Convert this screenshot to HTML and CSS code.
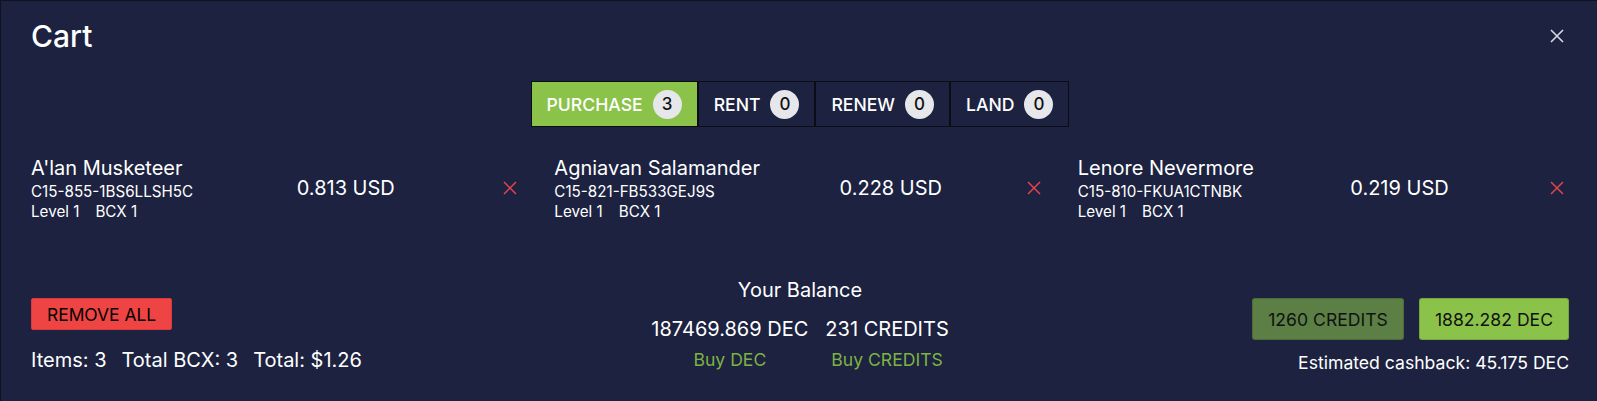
FILE: index.html
```html
<!DOCTYPE html>
<html lang="en">
<head>
<meta charset="utf-8">
<title>Cart</title>
<link rel="stylesheet" href="styles.css">
</head>
<body>
<div class="modal">
  <div class="header">
    <h1 class="title">Cart</h1>
    <button class="close" aria-label="Close">
      <svg width="14" height="14" viewBox="0 0 14 14"><path d="M1 1L13 13M13 1L1 13" stroke="#d7dae3" stroke-width="1.6" fill="none"/></svg>
    </button>
  </div>

  <div class="tabs">
    <div class="tab active">PURCHASE <span class="badge">3</span></div>
    <div class="tab">RENT <span class="badge">0</span></div>
    <div class="tab">RENEW <span class="badge">0</span></div>
    <div class="tab">LAND <span class="badge">0</span></div>
  </div>

  <div class="items">
    <div class="item">
      <div class="info">
        <div class="name">A'lan Musketeer</div>
        <div class="uid">C15-855-1BS6LLSH5C</div>
        <div class="meta"><span>Level 1</span><span>BCX 1</span></div>
      </div>
      <div class="price">0.813 USD</div>
      <button class="remove" aria-label="Remove"><svg width="14" height="14" viewBox="0 0 14 14"><path d="M1 1L13 13M13 1L1 13" stroke="#e3434b" stroke-width="1.5" fill="none"/></svg></button>
    </div>
    <div class="item">
      <div class="info">
        <div class="name">Agniavan Salamander</div>
        <div class="uid">C15-821-FB533GEJ9S</div>
        <div class="meta"><span>Level 1</span><span>BCX 1</span></div>
      </div>
      <div class="price">0.228 USD</div>
      <button class="remove" aria-label="Remove"><svg width="14" height="14" viewBox="0 0 14 14"><path d="M1 1L13 13M13 1L1 13" stroke="#e3434b" stroke-width="1.5" fill="none"/></svg></button>
    </div>
    <div class="item">
      <div class="info">
        <div class="name">Lenore Nevermore</div>
        <div class="uid">C15-810-FKUA1CTNBK</div>
        <div class="meta"><span>Level 1</span><span>BCX 1</span></div>
      </div>
      <div class="price">0.219 USD</div>
      <button class="remove" aria-label="Remove"><svg width="14" height="14" viewBox="0 0 14 14"><path d="M1 1L13 13M13 1L1 13" stroke="#e3434b" stroke-width="1.5" fill="none"/></svg></button>
    </div>
  </div>

  <div class="footer">
    <div class="left">
      <button class="remove-all">REMOVE ALL</button>
      <div class="totals"><span>Items: 3</span><span>Total BCX: 3</span><span>Total: $1.26</span></div>
    </div>
    <div class="balance">
      <div class="balance-title">Your Balance</div>
      <div class="balance-row">
        <div class="bal-col"><span class="amount">187469.869 DEC</span><a class="buy">Buy DEC</a></div>
        <div class="bal-col"><span class="amount">231 CREDITS</span><a class="buy">Buy CREDITS</a></div>
      </div>
    </div>
    <div class="right">
      <div class="pay">
        <button class="pay-btn credits">1260 CREDITS</button>
        <button class="pay-btn dec">1882.282 DEC</button>
      </div>
      <div class="cashback">Estimated cashback: 45.175 DEC</div>
    </div>
  </div>
</div>
</body>
</html>
```
FILE: styles.css
```css
* { box-sizing: border-box; }
html, body { margin: 0; padding: 0; background: #1c2240; }
body {
  font-family: Inter, "Noto Sans", sans-serif;
  color: #ffffff;
  overflow: hidden;
}
.modal {
  background: #1c2240;
  border-top: 1px solid #0f1220;
  border-left: 1px solid #0f1220;
  padding: 17px 28px 0 30px;
  min-height: 401px;
}
.header {
  display: flex;
  justify-content: space-between;
  align-items: center;
  height: 36px;
}
.title {
  margin: 0;
  font-size: 30px;
  font-weight: 500;
  line-height: 36px;
}
.close, .remove {
  width: 24px;
  height: 24px;
  padding: 0;
  border: 0;
  background: transparent;
  display: flex;
  align-items: center;
  justify-content: center;
  cursor: pointer;
}
.tabs {
  display: flex;
  justify-content: center;
  margin-top: 27px;
}
.tab {
  display: flex;
  align-items: center;
  gap: 10px;
  height: 46px;
  padding: 0 15px;
  border: 1px solid #0a0c16;
  font-size: 17.6px;
  font-weight: 500;
  color: #fff;
}
.tab.active { background: #8bc34a; }
.badge {
  width: 29px;
  height: 29px;
  border-radius: 50%;
  background: #e5e7eb;
  color: #111;
  display: flex;
  align-items: center;
  justify-content: center;
  font-size: 17px;
  font-weight: 500;
}
.items {
  display: grid;
  grid-template-columns: repeat(3, 1fr);
  column-gap: 32px;
  margin-top: 27px;
}
.item {
  display: flex;
  align-items: center;
  justify-content: space-between;
}
.name { font-size: 20px; line-height: 28px; }
.uid, .meta { font-size: 15.2px; line-height: 20px; }
.meta { display: flex; gap: 16px; }
.price { font-size: 20px; line-height: 28px; }
.footer {
  display: flex;
  align-items: flex-start;
  margin-top: 54px;
}
.left, .right { flex: 1; }
.left { margin-top: 22px; }
.remove-all {
  height: 32px;
  padding: 0 15px;
  background: #ef4444;
  border: 1px solid #dc3a3a;
  border-radius: 2px;
  font-family: inherit;
  font-size: 17.4px;
  color: #000;
}
.totals {
  margin-top: 16px;
  font-size: 20px;
  line-height: 28px;
  display: flex;
  gap: 15px;
}
.balance { text-align: center; }
.balance-title { font-size: 20px; line-height: 28px; }
.balance-row {
  display: flex;
  justify-content: center;
  gap: 17px;
  margin-top: 11px;
}
.bal-col {
  display: flex;
  flex-direction: column;
  align-items: center;
  gap: 3px;
}
.amount { font-size: 20px; line-height: 28px; }
.buy { font-size: 17.6px; line-height: 28px; color: #7cb342; }
.right {
  margin-top: 22px;
  display: flex;
  flex-direction: column;
  align-items: flex-end;
}
.pay { display: flex; gap: 15px; }
.pay-btn {
  height: 42px;
  padding: 0 15px;
  border: 1px solid rgba(0,0,0,0.15);
  border-radius: 3px;
  font-family: inherit;
  font-size: 17.6px;
  color: #111;
}
.pay-btn.credits { background: #5b7f45; }
.pay-btn.dec { background: #8bc34a; }
.cashback {
  margin-top: 9px;
  font-size: 17.6px;
  line-height: 28px;
}
```
